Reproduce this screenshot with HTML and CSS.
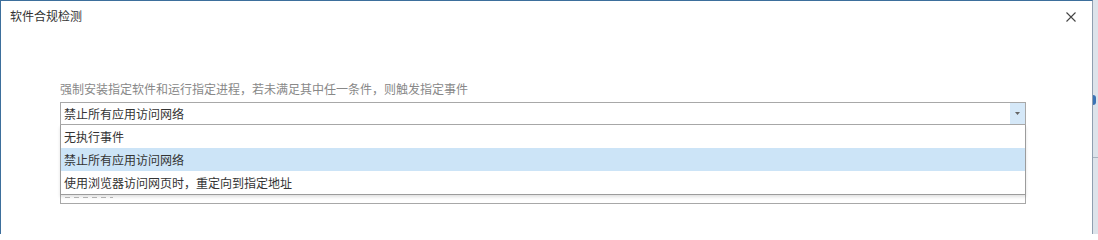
FILE: index.html
```html
<!DOCTYPE html>
<html lang="zh-CN">
<head>
<meta charset="utf-8">
<title>软件合规检测</title>
<link rel="stylesheet" href="styles.css">
</head>
<body>
<div class="screen">
  <div class="dialog">
    <div class="header">
      <span class="title">软件合规检测</span>
      <span class="close" aria-label="关闭">
        <svg width="10" height="10" viewBox="0 0 10 10"><path d="M0.5 0.5L9.5 9.5M9.5 0.5L0.5 9.5" stroke="#444" stroke-width="1.1" fill="none"/></svg>
      </span>
    </div>
    <div class="content">
      <p class="desc">强制安装指定软件和运行指定进程，若未满足其中任一条件，则触发指定事件</p>
      <div class="fields">
        <div class="combo">
          <span class="combo-value">禁止所有应用访问网络</span>
          <span class="combo-btn"><svg width="5" height="3" viewBox="0 0 5 3"><path d="M0 0H5L2.5 3Z" fill="#666"/></svg></span>
        </div>
        <div class="field2"><span class="field2-marks"></span></div>
        <ul class="list">
          <li class="item">无执行事件</li>
          <li class="item selected">禁止所有应用访问网络</li>
          <li class="item">使用浏览器访问网页时，重定向到指定地址</li>
        </ul>
      </div>
    </div>
  </div>
  <div class="outside">
    <span class="blob"></span>
    <span class="rule"></span>
  </div>
</div>
</body>
</html>
```
FILE: styles.css
```css
html, body {
  margin: 0;
  padding: 0;
  background: #fff;
}
body {
  font-family: "Noto Sans CJK SC", "Microsoft YaHei", sans-serif;
  font-size: 12px;
  color: #333;
}
.screen {
  display: flex;
  width: 1098px;
  height: 234px;
  overflow: hidden;
}
.dialog {
  width: 1093px;
  height: 234px;
  box-sizing: border-box;
  border-top: 1px solid #3d6f9c;
  border-left: 1px solid #3d6f9c;
  border-right: 1px solid #8f9fb0;
  background: #fff;
  display: flex;
  flex-direction: column;
}
.header {
  height: 30px;
  display: flex;
  align-items: center;
  justify-content: space-between;
  padding: 0 16px 0 9px;
}
.title {
  font-size: 12px;
  color: #333;
  line-height: 16px;
}
.close {
  display: flex;
  margin-top: 1px;
}
.content {
  padding-left: 59px;
  padding-right: 66px;
}
.desc {
  margin: 50px 0 0 0;
  font-size: 12px;
  line-height: 16px;
  color: #888;
}
.fields {
  position: relative;
  margin-top: 5px;
}
.combo {
  height: 23px;
  box-sizing: border-box;
  border: 1px solid #a8a8a8;
  display: flex;
  align-items: stretch;
}
.combo-value {
  flex: 1;
  padding-left: 3px;
  line-height: 21px;
  color: #333;
}
.combo-btn {
  width: 15px;
  background: #d5e8f8;
  display: flex;
  align-items: center;
  justify-content: center;
}
.field2 {
  margin-top: 55px;
  height: 24px;
  box-sizing: border-box;
  border: 1px solid #a8a8a8;
  position: relative;
}
.field2-marks {
  position: absolute;
  left: 4px;
  bottom: 5px;
  width: 48px;
  height: 1px;
  background: repeating-linear-gradient(90deg, #bbb 0 5px, transparent 5px 9px);
}
.list {
  position: absolute;
  left: 0;
  right: 0;
  top: 23px;
  margin: 0;
  padding: 0;
  list-style: none;
  background: #fff;
  border: 1px solid #9c9c9c;
  border-top: none;
  box-shadow: 0 2px 3px rgba(0,0,0,0.12);
}
.item {
  height: 23px;
  line-height: 23px;
  padding-left: 3px;
  color: #333;
}
.item.selected {
  background: #cce4f7;
}
.outside {
  flex: 1;
  background: #dde3ea;
  position: relative;
}
.blob {
  position: absolute;
  left: 0;
  top: 95px;
  width: 3px;
  height: 10px;
  border-radius: 0 3px 3px 0;
  background: #3a73b5;
}
.rule {
  position: absolute;
  left: 0;
  right: 0;
  top: 157px;
  height: 1px;
  background: #a9b3bf;
}
```
